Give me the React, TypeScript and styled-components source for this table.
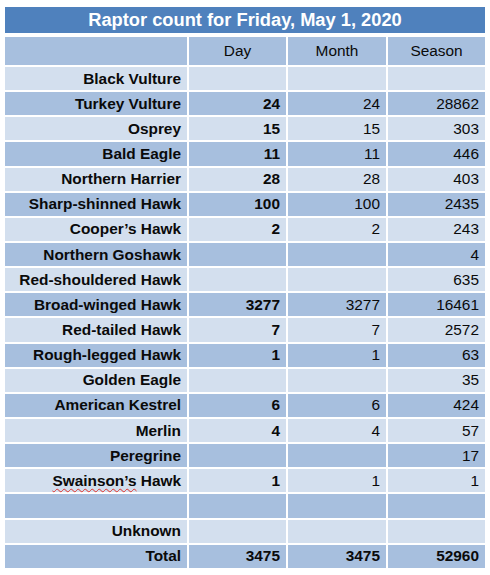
import styled, { createGlobalStyle } from 'styled-components';

const GlobalStyle = createGlobalStyle`
  body {
    margin: 0;
    background: #ffffff;
    font-family: "Liberation Sans", Arial, sans-serif;
  }
`;

const Page = styled.div`
  padding: 7px 5px 0 5px;
  width: 480px;
`;

const Title = styled.div`
  height: 26px;
  background: #4f81bd;
  color: #ffffff;
  font-weight: bold;
  font-size: 18.3px;
  display: flex;
  align-items: center;
  justify-content: center;
  margin-bottom: 4px;
`;

const Grid = styled.div`
  display: grid;
  grid-template-columns: 182px 97px 98px 97px;
  grid-template-rows: 28px;
  grid-auto-rows: 23.15px;
  gap: 2px;
`;

const Cell = styled.div<{ $light?: boolean; $bold?: boolean; $center?: boolean }>`
  background: ${(p) => (p.$light ? '#d3dfee' : '#a7bfde')};
  color: #0a0a0a;
  font-size: 15.4px;
  font-weight: ${(p) => (p.$bold ? 'bold' : 'normal')};
  display: flex;
  align-items: center;
  justify-content: ${(p) => (p.$center ? 'center' : 'flex-end')};
  padding-right: ${(p) => (p.$center ? '0' : '6px')};
  white-space: nowrap;
`;

const Misspelled = styled.span`
  text-decoration: underline wavy #e0302a;
  text-decoration-thickness: 1px;
  text-underline-offset: 2px;
`;

type Row = { name: string; day?: number; month?: number; season?: number };

const rows: Row[] = [
  { name: 'Black Vulture' },
  { name: 'Turkey Vulture', day: 24, month: 24, season: 28862 },
  { name: 'Osprey', day: 15, month: 15, season: 303 },
  { name: 'Bald Eagle', day: 11, month: 11, season: 446 },
  { name: 'Northern Harrier', day: 28, month: 28, season: 403 },
  { name: 'Sharp-shinned Hawk', day: 100, month: 100, season: 2435 },
  { name: 'Cooper’s Hawk', day: 2, month: 2, season: 243 },
  { name: 'Northern Goshawk', season: 4 },
  { name: 'Red-shouldered Hawk', season: 635 },
  { name: 'Broad-winged Hawk', day: 3277, month: 3277, season: 16461 },
  { name: 'Red-tailed Hawk', day: 7, month: 7, season: 2572 },
  { name: 'Rough-legged Hawk', day: 1, month: 1, season: 63 },
  { name: 'Golden Eagle', season: 35 },
  { name: 'American Kestrel', day: 6, month: 6, season: 424 },
  { name: 'Merlin', day: 4, month: 4, season: 57 },
  { name: 'Peregrine', season: 17 },
  { name: 'Swainson’s Hawk', day: 1, month: 1, season: 1 },
  { name: '' },
  { name: 'Unknown' },
];

const App = () => {
  return (
    <Page>
      <GlobalStyle />
      <Title>Raptor count for Friday, May 1, 2020</Title>
      <Grid>
        <Cell />
        <Cell $center>Day</Cell>
        <Cell $center>Month</Cell>
        <Cell $center>Season</Cell>
        {rows.map((r, i) => {
          const light = i % 2 === 0;
          return [
            <Cell key={`n${i}`} $light={light} $bold>
              {r.name === 'Swainson’s Hawk' ? (
                <span>
                  <Misspelled>Swainson’s</Misspelled> Hawk
                </span>
              ) : (
                r.name
              )}
            </Cell>,
            <Cell key={`d${i}`} $light={light} $bold>{r.day}</Cell>,
            <Cell key={`m${i}`} $light={light}>{r.month}</Cell>,
            <Cell key={`s${i}`} $light={light}>{r.season}</Cell>,
          ];
        })}
        <Cell $bold>Total</Cell>
        <Cell $bold>3475</Cell>
        <Cell $bold>3475</Cell>
        <Cell $bold>52960</Cell>
      </Grid>
    </Page>
  );
};

export default App;
